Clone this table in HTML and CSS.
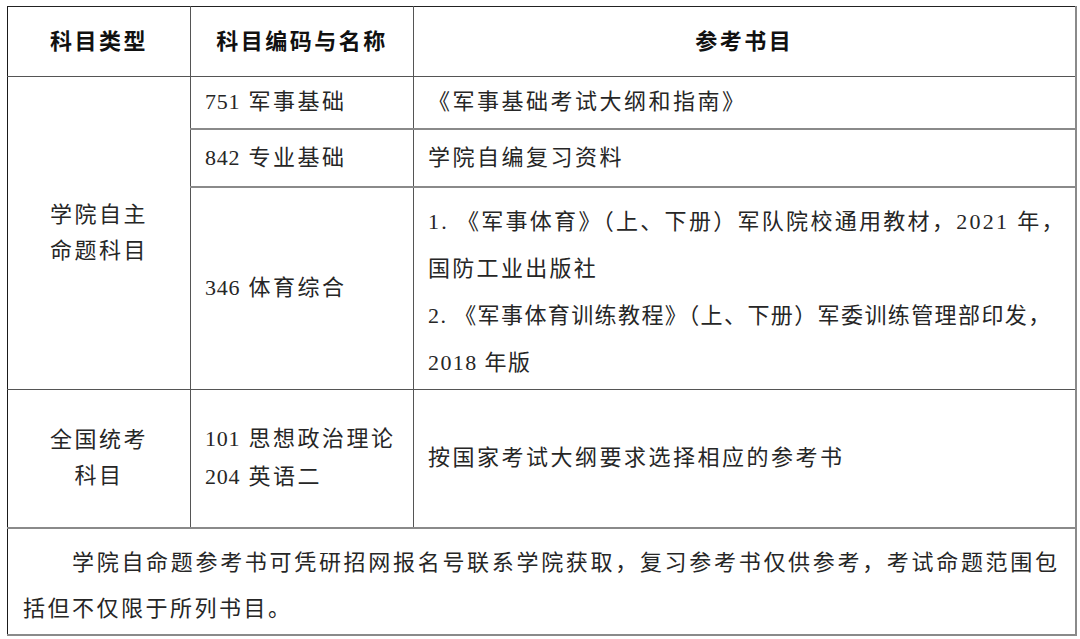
FILE: index.html
```html
<!DOCTYPE html>
<html lang="zh-CN">
<head>
<meta charset="utf-8">
<title>参考书目</title>
<link rel="stylesheet" href="styles.css">
</head>
<body>
<table class="ref-table">
  <colgroup>
    <col class="col-type">
    <col class="col-code">
    <col class="col-book">
  </colgroup>
  <thead>
    <tr class="row-head">
      <th>科目类型</th>
      <th>科目编码与名称</th>
      <th>参考书目</th>
    </tr>
  </thead>
  <tbody>
    <tr class="row-751">
      <td rowspan="3" class="type">学院自主<br>命题科目</td>
      <td class="code"><span class="num">751</span> 军事基础</td>
      <td class="book">《军事基础考试大纲和指南》</td>
    </tr>
    <tr class="row-842">
      <td class="code"><span class="num">842</span> 专业基础</td>
      <td class="book">学院自编复习资料</td>
    </tr>
    <tr class="row-346">
      <td class="code"><span class="num">346</span> 体育综合</td>
      <td class="book multi">
        <p class="item-wide">1. 《军事体育》（上、下册）军队院校通用教材，2021 年，<br>国防工业出版社</p>
        <p>2. 《军事体育训练教程》（上、下册）军委训练管理部印发，<br>2018 年版</p>
      </td>
    </tr>
    <tr class="row-nat">
      <td class="type">全国统考<br>科目</td>
      <td class="code two"><span class="num">101</span> 思想政治理论<br><span class="num">204</span> 英语二</td>
      <td class="book">按国家考试大纲要求选择相应的参考书</td>
    </tr>
    <tr class="row-note">
      <td colspan="3" class="note">学院自命题参考书可凭研招网报名号联系学院获取，复习参考书仅供参考，考试命题范围包括但不仅限于所列书目。</td>
    </tr>
  </tbody>
</table>
</body>
</html>
```

FILE: styles.css
```css
html, body {
  margin: 0;
  padding: 0;
  background: #ffffff;
}

body {
  padding: 6px 0 0 7px;
  font-family: "Liberation Serif", "Noto Sans CJK SC", serif;
  color: #262626;
}

.ref-table {
  border-collapse: collapse;
  table-layout: fixed;
  width: 1068px;
  font-size: 22px;
  letter-spacing: 2.5px;
}

.col-type { width: 183px; }
.col-code { width: 223px; }
.col-book { width: 662px; }

.ref-table th,
.ref-table td {
  border: 1px solid #555;
  padding: 0 14px;
  vertical-align: middle;
  text-align: left;
  line-height: 36px;
  font-weight: 400;
}

.ref-table th {
  text-align: center;
  font-weight: 700;
  color: #111;
  border-top: 1px solid #222;
}

.ref-table th:first-child,
.ref-table td.type,
.ref-table td.note {
  border-left: 1px solid #1a1a1a;
}

.ref-table th:last-child,
.ref-table td.book {
  border-right: 2px solid #8a8a8a;
}

.num {
  letter-spacing: 0.8px;
}

.row-head { height: 70px; }
.row-751 { height: 52px; }
.row-842 { height: 58px; }
.row-346 { height: 203px; }
.row-nat { height: 138px; }
.row-note { height: 107px; }

.row-751 td.code,
.row-751 td.book,
.row-842 td.code,
.row-842 td.book {
  border-bottom-color: #8a8a8a;
  border-bottom-width: 2px;
}

.ref-table td.type {
  text-align: center;
  padding: 0 8px;
}

.ref-table td.code {
  white-space: nowrap;
  padding-right: 6px;
}

.ref-table td.code.two {
  line-height: 38px;
}

.ref-table td.multi {
  line-height: 47px;
  letter-spacing: 1.4px;
  text-align: left;
  padding: 8px 8px 0 14px;
}

.ref-table td.multi p {
  margin: 0;
}

.ref-table td.multi p.item-wide {
  letter-spacing: 2.3px;
}

.ref-table td.note {
  line-height: 46px;
  text-align: justify;
  text-indent: 49px;
  padding: 9px 15px 0 15px;
  border-bottom: 2px solid #8a8a8a;
  border-right: 2px solid #8a8a8a;
  border-top: 2px solid #8a8a8a;
}
```
